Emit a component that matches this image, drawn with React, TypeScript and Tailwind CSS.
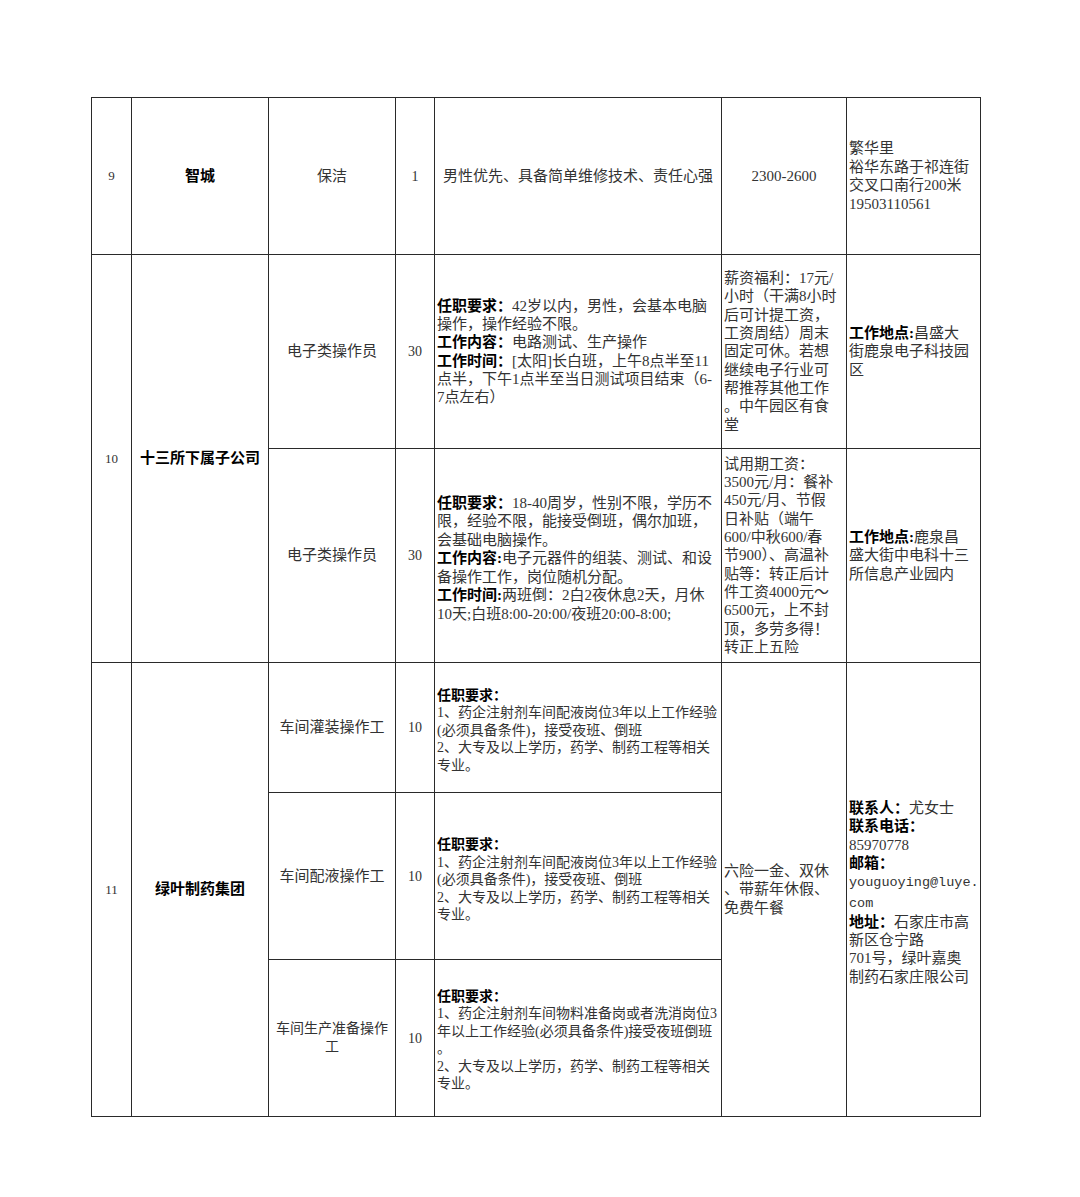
import React from "react";

const B = ({ children }: { children: React.ReactNode }) => (
  <span className="font-bold text-black">{children}</span>
);

const td = "border-[1.5px] border-[#2a2a2a] align-middle p-0";

export default function App() {
  return (
    <div
      className="min-h-[1197px] w-[1080px] bg-white pt-[97px] pl-[91px] text-[#333]"
      style={{ fontFamily: '"Liberation Serif", "Noto Sans CJK SC", serif' }}
    >
      <table className="table-fixed border-collapse w-[890px]">
        <colgroup>
          <col className="w-[40px]" />
          <col className="w-[137px]" />
          <col className="w-[127px]" />
          <col className="w-[39px]" />
          <col className="w-[287px]" />
          <col className="w-[125px]" />
          <col className="w-[134px]" />
        </colgroup>
        <tbody>
          {/* Row 9 */}
          <tr className="h-[157px]">
            <td className={`${td} text-center text-[13px]`}>9</td>
            <td className={`${td} text-center text-[15px]`}>
              <B>智城</B>
            </td>
            <td className={`${td} text-center text-[15px]`}>保洁</td>
            <td className={`${td} text-center text-[14px]`}>1</td>
            <td className={`${td} text-[15px] pl-[8px] whitespace-nowrap`}>
              男性优先、具备简单维修技术、责任心强
            </td>
            <td className={`${td} text-center text-[15px]`}>2300-2600</td>
            <td className={`${td} text-[15px] leading-[18.5px] pl-[2px] whitespace-nowrap`}>
              繁华里
              <br />
              裕华东路于祁连街
              <br />
              交叉口南行200米
              <br />
              19503110561
            </td>
          </tr>
          {/* Row 10a */}
          <tr className="h-[194px]">
            <td rowSpan={2} className={`${td} text-center text-[13px]`}>
              10
            </td>
            <td rowSpan={2} className={`${td} text-center text-[15px]`}>
              <B>十三所下属子公司</B>
            </td>
            <td className={`${td} text-center text-[15px]`}>电子类操作员</td>
            <td className={`${td} text-center text-[14px]`}>30</td>
            <td className={`${td} text-[15px] leading-[18.3px] pl-[2px] whitespace-nowrap`}>
              <div>
                <B>任职要求：</B>42岁以内，男性，会基本电脑
                <br />
                操作，操作经验不限。
                <br />
                <B>工作内容：</B>电路测试、生产操作
                <br />
                <B>工作时间：</B>[太阳]长白班，上午8点半至11
                <br />
                点半，下午1点半至当日测试项目结束（6-
                <br />
                7点左右）
              </div>
            </td>
            <td className={`${td} text-[15px] leading-[18.3px] pl-[2px] whitespace-nowrap`}>
              薪资福利：17元/
              <br />
              小时（干满8小时
              <br />
              后可计提工资，
              <br />
              工资周结）周末
              <br />
              固定可休。若想
              <br />
              继续电子行业可
              <br />
              帮推荐其他工作
              <br />
              。中午园区有食
              <br />
              堂
            </td>
            <td className={`${td} text-[15px] leading-[18.3px] pl-[2px] whitespace-nowrap`}>
              <B>工作地点:</B>昌盛大
              <br />
              街鹿泉电子科技园
              <br />区
            </td>
          </tr>
          {/* Row 10b */}
          <tr className="h-[214px]">
            <td className={`${td} text-center text-[15px]`}>电子类操作员</td>
            <td className={`${td} text-center text-[14px]`}>30</td>
            <td className={`${td} text-[15px] leading-[18.5px] pl-[2px] whitespace-nowrap`}>
              <div className="mt-[6px]">
                <B>任职要求：</B>18-40周岁，性别不限，学历不
                <br />
                限，经验不限，能接受倒班，偶尔加班，
                <br />
                会基础电脑操作。
                <br />
                <B>工作内容:</B>电子元器件的组装、测试、和设
                <br />
                备操作工作，岗位随机分配。
                <br />
                <B>工作时间:</B>两班倒：2白2夜休息2天，月休
                <br />
                10天;白班8:00-20:00/夜班20:00-8:00;
              </div>
            </td>
            <td className={`${td} text-[15px] leading-[18.3px] pl-[2px] whitespace-nowrap`}>
              试用期工资：
              <br />
              3500元/月：餐补
              <br />
              450元/月、节假
              <br />
              日补贴（端午
              <br />
              600/中秋600/春
              <br />
              节900）、高温补
              <br />
              贴等：转正后计
              <br />
              件工资4000元～
              <br />
              6500元，上不封
              <br />
              顶，多劳多得！
              <br />
              转正上五险
            </td>
            <td className={`${td} text-[15px] leading-[18.3px] pl-[2px] whitespace-nowrap`}>
              <B>工作地点:</B>鹿泉昌
              <br />
              盛大街中电科十三
              <br />
              所信息产业园内
            </td>
          </tr>
          {/* Row 11a */}
          <tr className="h-[130px]">
            <td rowSpan={3} className={`${td} text-center text-[13px]`}>
              11
            </td>
            <td rowSpan={3} className={`${td} text-center text-[15px]`}>
              <B>绿叶制药集团</B>
            </td>
            <td className={`${td} text-center text-[15px]`}>车间灌装操作工</td>
            <td className={`${td} text-center text-[14px]`}>10</td>
            <td className={`${td} text-[14px] leading-[17.5px] pl-[2px] whitespace-nowrap`}>
              <div className="mt-[6px]">
                <B>任职要求：</B>
                <br />
                1、药企注射剂车间配液岗位3年以上工作经验
                <br />
                (必须具备条件)，接受夜班、倒班
                <br />
                2、大专及以上学历，药学、制药工程等相关
                <br />
                专业。
              </div>
            </td>
            <td
              rowSpan={3}
              className={`${td} text-[15px] leading-[18.3px] pl-[2px] whitespace-nowrap`}
            >
              六险一金、双休
              <br />
              、带薪年休假、
              <br />
              免费午餐
            </td>
            <td
              rowSpan={3}
              className={`${td} text-[15px] leading-[18.3px] pl-[2px] whitespace-nowrap`}
            >
              <div className="mt-[6px]">
                <B>联系人：</B>尤女士
                <br />
                <B>联系电话：</B>
                <br />
                85970778
                <br />
                <B>邮箱：</B>
                <br />
                <span
                  className="text-[13.5px]"
                  style={{ fontFamily: '"Liberation Mono", monospace' }}
                >
                  youguoying@luye.
                  <br />
                  com
                </span>
                <br />
                <B>地址：</B>石家庄市高
                <br />
                新区仓宁路
                <br />
                701号，绿叶嘉奥
                <br />
                制药石家庄限公司
              </div>
            </td>
          </tr>
          {/* Row 11b */}
          <tr className="h-[167px]">
            <td className={`${td} text-center text-[15px]`}>车间配液操作工</td>
            <td className={`${td} text-center text-[14px]`}>10</td>
            <td className={`${td} text-[14px] leading-[17.5px] pl-[2px] whitespace-nowrap`}>
              <div className="mt-[8px]">
                <B>任职要求：</B>
                <br />
                1、药企注射剂车间配液岗位3年以上工作经验
                <br />
                (必须具备条件)，接受夜班、倒班
                <br />
                2、大专及以上学历，药学、制药工程等相关
                <br />
                专业。
              </div>
            </td>
          </tr>
          {/* Row 11c */}
          <tr className="h-[157px]">
            <td className={`${td} text-center text-[14px] leading-[18px]`}>
              车间生产准备操作
              <br />工
            </td>
            <td className={`${td} text-center text-[14px]`}>10</td>
            <td className={`${td} text-[14px] leading-[17.5px] pl-[2px] whitespace-nowrap`}>
              <div className="mt-[4px]">
                <B>任职要求：</B>
                <br />
                1、药企注射剂车间物料准备岗或者洗消岗位3
                <br />
                年以上工作经验(必须具备条件)接受夜班倒班
                <br />
                。
                <br />
                2、大专及以上学历，药学、制药工程等相关
                <br />
                专业。
              </div>
            </td>
          </tr>
        </tbody>
      </table>
    </div>
  );
}
